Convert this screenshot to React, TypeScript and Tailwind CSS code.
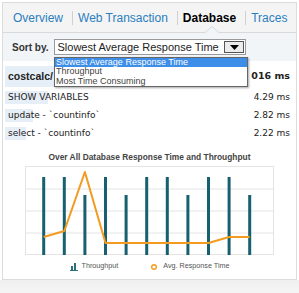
import React from 'react';

const sans = { fontFamily: '"Liberation Sans", Arial, sans-serif' };
const dejavu = { fontFamily: '"DejaVu Sans", Verdana, sans-serif' };

export default function App() {
  const tabs = ['Overview', 'Web Transaction', 'Database', 'Traces'];
  const rows = [
    { name: 'SHOW VARIABLES', value: '4.29 ms', bar: 43 },
    { name: 'update - `countinfo`', value: '2.82 ms', bar: 28 },
    { name: 'select - `countinfo`', value: '2.22 ms', bar: 21 },
  ];
  const barH = [11, 11, 29, 11, 29, 11, 11, 29, 11, 11, 29];
  const line = [71, 65, 6, 77, 77, 77, 77, 77, 77, 71, 71];
  const xs = barH.map((_, i) => 18.7 + i * 20.6);

  return (
    <div className="w-[299px] h-[293px] bg-white overflow-hidden" style={sans}>
      <div className="mx-[2px] mt-[2px] border border-[#dcdcdc] bg-white">
        {/* Tabs */}
        <div className="relative h-[30px] bg-[#f4f4f4] border-b border-[#d9d9d9] flex items-center pl-[10px] text-[12px]">
          {tabs.map((t, i) => (
            <React.Fragment key={t}>
              {i > 0 && <span className="ml-[9px] mr-[5px] w-px h-[14px] bg-[#d0d0d0]" />}
              <span className={t === 'Database' ? 'font-bold text-black' : 'text-[#2a7ec0]'}>{t}</span>
            </React.Fragment>
          ))}
          <svg className="absolute left-[202px] bottom-[-1px]" width="14" height="7" viewBox="0 0 14 7">
            <path d="M0 7 L7 0 L14 7 Z" fill="#f1f5f8" />
            <path d="M0 6.5 L7 0.5 L14 6.5" fill="none" stroke="#d9d9d9" />
          </svg>
        </div>

        {/* Sort by */}
        <div className="relative h-[28px] bg-[#f1f5f8] flex items-center pl-[9px] gap-[6px]">
          <span className="font-bold text-[10px] text-[#333]">Sort by.</span>
          <div className="h-[16px] w-[192px] border border-[#9a9a9a] bg-white flex items-center justify-between pl-[2px] pr-[1px]">
            <span className="text-[11px] text-[#222] whitespace-nowrap">Slowest Average Response Time</span>
            <span className="w-[20px] h-[12px] bg-[#ececec] border border-[#555] flex items-center justify-center">
              <svg width="9" height="5" viewBox="0 0 9 5"><path d="M0 0 H9 L4.5 5 Z" fill="#000" /></svg>
            </span>
          </div>
          <div className="absolute left-[51px] top-[24px] w-[194px] border border-[#666] bg-white shadow-[1px_1px_2px_rgba(0,0,0,0.35)] z-10 text-[9px] leading-[9.3px]">
            <div className="bg-[#3d8ee8] text-white pl-[1px]">Slowest Average Response Time</div>
            <div className="text-[#444] pl-[1px]">Throughput</div>
            <div className="text-[#444] pl-[1px]">Most Time Consuming</div>
          </div>
        </div>

        {/* Rows */}
        <div className="px-[2px] pt-[5px]">
          <div className="relative h-[21px] flex items-center justify-between pl-[3px] pr-[4px]">
            <div className="absolute left-0 top-0 bottom-0 w-[177px] bg-[#e6eef7]" />
            <span className="relative font-bold text-[10.5px] text-[#222]">costcalc/</span>
            <span className="relative font-bold text-[9.5px] text-[#222]" style={dejavu}>016 ms</span>
          </div>
          <div className="flex flex-col gap-[5px] mt-[4px]" style={dejavu}>
            {rows.map((r) => (
              <div key={r.name} className="relative h-[13px] flex items-center justify-between pl-[3px] pr-[4px] text-[9px] text-[#222]">
                <div className="absolute left-0 top-0 bottom-0 bg-[#e6eef7]" style={{ width: r.bar }} />
                <span className="relative whitespace-nowrap">{r.name}</span>
                <span className="relative">{r.value}</span>
              </div>
            ))}
          </div>
        </div>

        {/* Chart */}
        <div className="mt-[12px] flex flex-col items-center">
          <div className="font-bold text-[8.4px] leading-[10px] text-[#444]">Over All Database Response Time and Throughput</div>
          <svg className="mt-[4px]" width="249" height="89" viewBox="0 0 249 89">
            {[0.5, 23, 45, 67, 88.5].map((y) => (
              <line key={y} x1="0" x2="249" y1={y} y2={y} stroke="#e4e4e4" strokeWidth="1" />
            ))}
            <line x1="0.5" x2="0.5" y1="0" y2="89" stroke="#e4e4e4" />
            <line x1="248.5" x2="248.5" y1="0" y2="89" stroke="#e4e4e4" />
            {xs.map((x, i) => (
              <rect key={i} x={x - 1.5} y={barH[i]} width="3" height={89 - barH[i]} fill="#17606f" />
            ))}
            <polyline
              points={xs.map((x, i) => `${x},${line[i]}`).join(' ')}
              fill="none"
              stroke="#f29b1e"
              strokeWidth="2"
              strokeLinejoin="round"
            />
          </svg>
          <div className="mt-[7px] mb-[8px] h-[9px] flex items-center text-[7.2px] text-[#555]">
            <svg width="8" height="8" viewBox="0 0 8 8" className="mr-[4px]">
              <rect x="1" y="3" width="2" height="4" fill="#2c6e7c" />
              <rect x="4" y="0" width="2" height="7" fill="#2c6e7c" />
              <rect x="0" y="7" width="8" height="1" fill="#2c6e7c" />
            </svg>
            <span>Throughput</span>
            <svg width="8" height="8" viewBox="0 0 8 8" className="ml-[32px] mr-[5px]">
              <circle cx="4" cy="4" r="2.3" fill="none" stroke="#f29b1e" strokeWidth="1.4" />
            </svg>
            <span>Avg. Response Time</span>
          </div>
        </div>
      </div>
      <div className="h-[20px] bg-gradient-to-b from-[#f0f0f0] to-[#f8f8f8]" />
    </div>
  );
}
